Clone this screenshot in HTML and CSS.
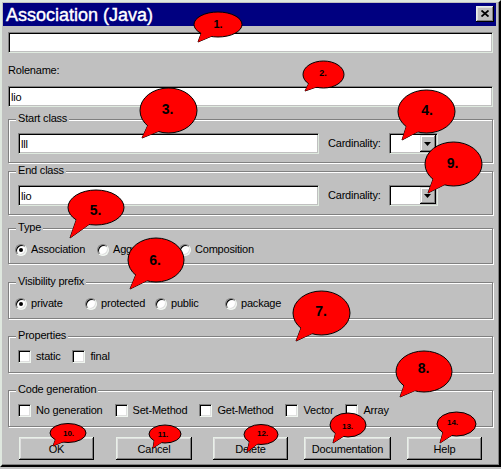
FILE: index.html
```html
<!DOCTYPE html>
<html lang="en">
<head>
<meta charset="utf-8">
<title>Association (Java)</title>
<link rel="stylesheet" href="styles.css">
</head>
<body>
<div class="window">
  <div class="titlebar">
    <span class="title">Association (Java)</span>
    <button class="close" type="button" aria-label="Close">
      <svg width="8" height="7" viewBox="0 0 8 7"><path d="M0.5 0.5 L7.5 6.5 M7.5 0.5 L0.5 6.5" stroke="#000" stroke-width="1.8" fill="none"/></svg>
    </button>
  </div>
  <div class="content">
    <input class="field field-top" type="text" value="">
    <label class="rolename-label">Rolename:</label>
    <input class="field field-role" type="text" value="lio">

    <fieldset class="group group-start">
      <legend>Start class</legend>
      <div class="class-row">
        <input class="field class-field" type="text" value="lll">
        <span class="card-label">Cardinality:</span>
        <div class="combo"><span class="combo-btn"><svg width="7" height="4" viewBox="0 0 7 4"><polygon points="0,0 7,0 3.5,4" fill="#000"/></svg></span></div>
      </div>
    </fieldset>

    <fieldset class="group group-end">
      <legend>End class</legend>
      <div class="class-row">
        <input class="field class-field" type="text" value="lio">
        <span class="card-label">Cardinality:</span>
        <div class="combo"><span class="combo-btn"><svg width="7" height="4" viewBox="0 0 7 4"><polygon points="0,0 7,0 3.5,4" fill="#000"/></svg></span></div>
      </div>
    </fieldset>

    <fieldset class="group group-type">
      <legend>Type</legend>
      <div class="radio-row radio-row-type">
        <span class="opt"><span class="radio checked"></span>Association</span>
        <span class="opt"><span class="radio"></span>Aggregation</span>
        <span class="opt"><span class="radio"></span>Composition</span>
      </div>
    </fieldset>

    <fieldset class="group group-vis">
      <legend>Visibility prefix</legend>
      <div class="radio-row radio-row-vis">
        <span class="opt"><span class="radio checked"></span>private</span>
        <span class="opt"><span class="radio"></span>protected</span>
        <span class="opt"><span class="radio"></span>public</span>
        <span class="opt"><span class="radio"></span>package</span>
      </div>
    </fieldset>

    <fieldset class="group group-props">
      <legend>Properties</legend>
      <div class="check-row">
        <span class="opt opt-check"><span class="check"></span>static</span>
        <span class="opt opt-check"><span class="check"></span>final</span>
      </div>
    </fieldset>

    <fieldset class="group group-code">
      <legend>Code generation</legend>
      <div class="check-row">
        <span class="opt opt-check"><span class="check"></span>No generation</span>
        <span class="opt opt-check"><span class="check"></span>Set-Method</span>
        <span class="opt opt-check"><span class="check"></span>Get-Method</span>
        <span class="opt opt-check"><span class="check"></span>Vector</span>
        <span class="opt opt-check"><span class="check"></span>Array</span>
      </div>
    </fieldset>

    <div class="buttons">
      <button class="btn" type="button">OK</button>
      <button class="btn btn-cancel" type="button">Cancel</button>
      <button class="btn" type="button">Delete</button>
      <button class="btn btn-doc" type="button">Documentation</button>
      <button class="btn" type="button">Help</button>
    </div>
  </div>
</div>

<svg class="callouts" width="501" height="469" viewBox="0 0 501 469" aria-hidden="true">
  <g>
    <polygon class="tail" points="215.6,34.5 202.4,30.1 198,42"/>
    <ellipse cx="218" cy="24.5" rx="24" ry="12.5"/>
    <polygon class="tail-fill" points="215.6,34.5 202.4,30.1 198,42"/>
    <text class="n-md" x="218" y="27.5">1.</text>
  </g>
  <g>
    <polygon class="tail" points="321.5,85.3 310.2,80.6 305,91"/>
    <ellipse cx="323.5" cy="74.5" rx="20.5" ry="13.5"/>
    <polygon class="tail-fill" points="321.5,85.3 310.2,80.6 305,91"/>
    <text class="n-xs" x="323" y="76">2.</text>
  </g>
  <g>
    <polygon class="tail" points="165.6,128.5 150,120.6 142,138"/>
    <ellipse cx="168.5" cy="110.5" rx="28.5" ry="22.5"/>
    <polygon class="tail-fill" points="165.6,128.5 150,120.6 142,138"/>
    <text class="n-lg" x="167.5" y="113.5">3.</text>
  </g>
  <g>
    <polygon class="tail" points="423.6,128.7 408,121.2 402,140"/>
    <ellipse cx="426.5" cy="111.5" rx="28.5" ry="21.5"/>
    <polygon class="tail-fill" points="423.6,128.7 408,121.2 402,140"/>
    <text class="n-lg" x="427" y="115">4.</text>
  </g>
  <g>
    <polygon class="tail" points="450.6,181.6 435,173.9 428,193"/>
    <ellipse cx="453.5" cy="164" rx="28.5" ry="22"/>
    <polygon class="tail-fill" points="450.6,181.6 435,173.9 428,193"/>
    <text class="n-lg" x="452.5" y="167.5">9.</text>
  </g>
  <g>
    <polygon class="tail" points="93.2,221.5 77.8,215.4 70,238"/>
    <ellipse cx="96" cy="207.5" rx="28" ry="17.5"/>
    <polygon class="tail-fill" points="93.2,221.5 77.8,215.4 70,238"/>
    <text class="n-lg" x="95.5" y="214.5">5.</text>
  </g>
  <g>
    <polygon class="tail" points="153.2,277.6 137.8,269.9 130,289"/>
    <ellipse cx="156" cy="260" rx="28" ry="22"/>
    <polygon class="tail-fill" points="153.2,277.6 137.8,269.9 130,289"/>
    <text class="n-lg" x="155" y="264.5">6.</text>
  </g>
  <g>
    <polygon class="tail" points="318.6,330.6 303,322.9 296,341"/>
    <ellipse cx="321.5" cy="313" rx="28.5" ry="22"/>
    <polygon class="tail-fill" points="318.6,330.6 303,322.9 296,341"/>
    <text class="n-lg" x="321" y="316">7.</text>
  </g>
  <g>
    <polygon class="tail" points="421.2,387.9 405.8,380.7 400,397"/>
    <ellipse cx="424" cy="371.5" rx="28" ry="20.5"/>
    <polygon class="tail-fill" points="421.2,387.9 405.8,380.7 400,397"/>
    <text class="n-lg" x="423.5" y="372.5">8.</text>
  </g>
  <g>
    <polygon class="tail" points="66.2,440.6 56.3,437.3 53,446"/>
    <ellipse cx="68" cy="433" rx="18" ry="9.5"/>
    <polygon class="tail-fill" points="66.2,440.6 56.3,437.3 53,446"/>
    <text class="n-sm" x="68.5" y="435.5">10.</text>
  </g>
  <g>
    <polygon class="tail" points="163.4,441.2 154.6,438 153,448"/>
    <ellipse cx="165" cy="434" rx="16" ry="9"/>
    <polygon class="tail-fill" points="163.4,441.2 154.6,438 153,448"/>
    <text class="n-sm" x="163" y="436.5">11.</text>
  </g>
  <g>
    <polygon class="tail" points="259.3,442.5 250,439 247,452"/>
    <ellipse cx="261" cy="434.5" rx="17" ry="10"/>
    <polygon class="tail-fill" points="259.3,442.5 250,439 247,452"/>
    <text class="n-sm" x="262.5" y="436">12.</text>
  </g>
  <g>
    <polygon class="tail" points="346.2,434.6 336.3,430.4 333,443"/>
    <ellipse cx="348" cy="425" rx="18" ry="12"/>
    <polygon class="tail-fill" points="346.2,434.6 336.3,430.4 333,443"/>
    <text class="n-sm" x="347.5" y="428.5">13.</text>
  </g>
  <g>
    <polygon class="tail" points="454.5,433.6 443.8,429.4 440,443"/>
    <ellipse cx="456.5" cy="424" rx="19.5" ry="12"/>
    <polygon class="tail-fill" points="454.5,433.6 443.8,429.4 440,443"/>
    <text class="n-sm" x="452.5" y="424.5">14.</text>
  </g>
</svg>
</body>
</html>
```
FILE: styles.css
```css
* { box-sizing: border-box; }

html, body { margin: 0; padding: 0; }

body {
  position: relative;
  width: 501px;
  height: 469px;
  overflow: hidden;
  background: #c0c0c0;
  font-family: "Liberation Sans", Arial, sans-serif;
  font-size: 11px;
  letter-spacing: -0.2px;
  color: #000;
}

.window {
  width: 501px;
  height: 467px;
  border: 2px solid;
  border-color: #dfe8df #000 #000 #dfe8df;
  box-shadow: inset -1px -1px #808080;
  padding: 1px 3px 3px 1px;
  background: #c0c0c0;
}

.titlebar {
  height: 23px;
  background: #000080;
  display: flex;
  align-items: flex-start;
  justify-content: space-between;
  padding: 0 2px 0 3px;
}

.title {
  color: #fff;
  font-size: 18px;
  line-height: 21px;
  padding-top: 2px;
  letter-spacing: 0;
  white-space: nowrap;
  -webkit-text-stroke: 0.4px #fff;
}

.close {
  width: 18px;
  height: 16px;
  margin-top: 3px;
  padding: 0 1px 1px 0;
  border: none;
  background: #c0c0c0;
  display: flex;
  align-items: center;
  justify-content: center;
  box-shadow: inset -1px -1px #000, inset 1px 1px #e8f0e8, inset -2px -2px #808080, inset 2px 2px #dfdfdf;
}

.close svg { display: block; }

.content { padding: 0 3px 0 5px; }

.field {
  display: block;
  width: 100%;
  height: 21px;
  margin: 0;
  padding: 0 2px;
  border: 1px solid;
  border-color: #808080 #dfeadf #dfeadf #808080;
  box-shadow: inset 1px 1px #000, inset -1px -1px #c0c0c0;
  background: #fff;
  font: inherit;
  letter-spacing: inherit;
  color: #000;
  outline: none;
}

.field-top { margin-top: 6px; }

.rolename-label {
  display: block;
  line-height: 13px;
  margin-top: 11px;
}

.field-role { margin-top: 9px; }

.group {
  margin: 0;
  min-width: 0;
  border: 1px solid #808080;
  box-shadow: inset 1px 1px #fff, 1px 1px #fff;
  padding: 6px 9px 8px 9px;
}

.group legend {
  margin-left: -2px;
  padding: 0 2px 3px 2px;
  line-height: 12px;
  background: #c0c0c0;
}

.group-start { margin-top: 5px; }
.group-end { margin-top: 1px; }
.group-type { margin-top: 6px; padding-top: 7px; padding-bottom: 7px; }
.group-vis { margin-top: 11px; padding-top: 7px; padding-bottom: 8px; }
.group-props { margin-top: 10px; padding-bottom: 9px; }
.group-code { margin-top: 10px; padding-bottom: 9px; }

.class-row {
  display: flex;
  align-items: center;
}

.class-field {
  width: 301px;
  flex: none;
}

.card-label {
  width: 52px;
  margin: 0 9px 0 9px;
  white-space: nowrap;
  line-height: 13px;
  flex: none;
}

.combo {
  width: 49px;
  height: 21px;
  flex: none;
  display: flex;
  justify-content: flex-end;
  padding: 1px;
  border: 1px solid;
  border-color: #808080 #dfeadf #dfeadf #808080;
  box-shadow: inset 1px 1px #000, inset -1px -1px #c0c0c0;
  background: #fff;
}

.combo-btn {
  width: 16px;
  height: 17px;
  background: #c0c0c0;
  display: flex;
  align-items: center;
  justify-content: center;
  padding: 1px 1px 0 0;
  box-shadow: inset -1px -1px #000, inset 1px 1px #dfdfdf, inset -2px -2px #808080, inset 2px 2px #fff;
}

.combo-btn svg { display: block; }

.radio-row {
  display: grid;
  height: 13px;
  align-items: center;
  margin-left: -3px;
}

.radio-row-type { grid-template-columns: 82px 82px auto; }
.radio-row-vis { grid-template-columns: 70px 70px 70px auto; }

.opt {
  display: flex;
  align-items: center;
  gap: 4px;
  line-height: 13px;
  white-space: nowrap;
}

.radio {
  position: relative;
  width: 12px;
  height: 12px;
  flex: none;
  border-radius: 50%;
  border: 1px solid;
  border-color: #808080 #f0f6f0 #f0f6f0 #808080;
  box-shadow: inset 1px 1px #000, inset -1px -1px #dfdfdf;
  background: #fff;
}

.radio.checked::after {
  content: "";
  position: absolute;
  left: 3px;
  top: 3px;
  width: 4px;
  height: 4px;
  border-radius: 50%;
  background: #000;
}

.check-row {
  display: flex;
  align-items: center;
  gap: 12px;
  height: 13px;
}

.opt-check { gap: 5px; }

.check {
  width: 13px;
  height: 13px;
  flex: none;
  border: 1px solid;
  border-color: #808080 #f0f6f0 #f0f6f0 #808080;
  box-shadow: inset 1px 1px #000, inset -1px -1px #dfdfdf;
  background: #fff;
}

.buttons {
  display: grid;
  grid-template-columns: 97px 97px 91px 103px 75px;
  margin-top: 10px;
  padding-left: 11px;
}

.btn {
  width: 75px;
  height: 23px;
  margin: 0;
  padding: 0;
  border: none;
  background: #c0c0c0;
  font: inherit;
  letter-spacing: inherit;
  color: #000;
  box-shadow: inset -1px -1px #000, inset 1px 1px #e8f0e8, inset -2px -2px #808080, inset 2px 2px #dfdfdf;
}

.btn-cancel { width: 76px; }
.btn-doc { width: 87px; }

.callouts {
  position: absolute;
  left: 0;
  top: 0;
  pointer-events: none;
}

.callouts ellipse,
.callouts .tail {
  fill: #ff0000;
  stroke: #000;
  stroke-width: 1;
}

.callouts .tail-fill {
  fill: #ff0000;
  stroke: none;
}

.callouts text {
  font-family: "Liberation Sans", Arial, sans-serif;
  font-weight: bold;
  letter-spacing: 0;
  text-anchor: middle;
  fill: #000;
}

.n-lg { font-size: 14px; }
.n-md { font-size: 11px; }
.n-xs { font-size: 9px; }
.n-sm { font-size: 8px; }
```
